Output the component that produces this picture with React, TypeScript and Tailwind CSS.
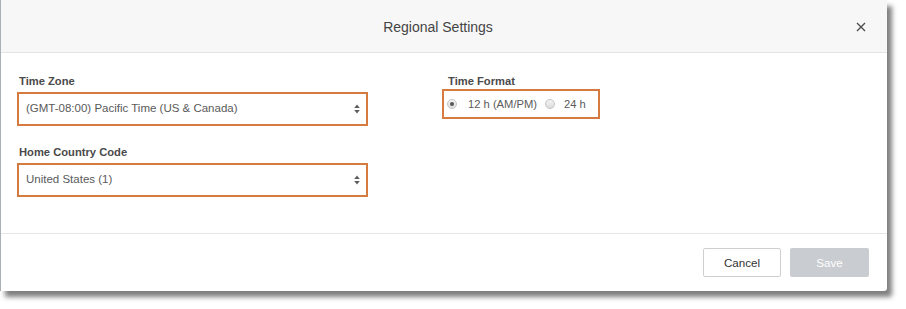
import { useState } from "react";

const font = { fontFamily: '"Liberation Sans", Arial, Helvetica, sans-serif' };

function SelectArrows() {
  return (
    <svg width="6" height="10" viewBox="0 0 6 10" className="shrink-0">
      <path d="M3 0.5 L5.8 4 L0.2 4 Z" fill="#5c5c5c" />
      <path d="M3 9.5 L5.8 6 L0.2 6 Z" fill="#5c5c5c" />
    </svg>
  );
}

function FakeSelect({ value }: { value: string }) {
  return (
    <div className="flex h-[34px] w-[351px] items-center justify-between border-2 border-[#d57b40] bg-white pl-[7px] pr-[6px]">
      <span className="text-[11.5px] text-[#5a5a5a]">{value}</span>
      <SelectArrows />
    </div>
  );
}

function Radio({ checked }: { checked: boolean }) {
  return (
    <span className="flex h-[10px] w-[10px] shrink-0 items-center justify-center rounded-full border border-[#c4c4c4] bg-gradient-to-b from-[#f4f4f4] to-[#dcdcdc]">
      {checked && <span className="h-[4px] w-[4px] rounded-full bg-[#555]" />}
    </span>
  );
}

export default function App() {
  const [format, setFormat] = useState<"12" | "24">("12");

  return (
    <div className="h-[309px] w-[906px] overflow-hidden bg-white" style={font}>
      <div className="flex h-[291px] w-[887px] flex-col rounded-br-[3px] border-l border-[#a9b0b6] bg-white shadow-[5px_6px_5px_rgba(0,0,0,0.5)]">
        {/* header */}
        <div className="relative flex h-[53px] shrink-0 items-center justify-center border-b border-[#e4e4e4] bg-[#f7f7f7] pr-[12px] pt-[2px]">
          <span className="text-[14px] text-[#444]">Regional Settings</span>
          <button className="absolute right-[20px] top-[21px] flex h-[12px] w-[12px] items-center justify-center">
            <svg width="10" height="10" viewBox="0 0 10 10">
              <path d="M1 1 L9 9 M9 1 L1 9" stroke="#4a4a4a" strokeWidth="1.3" />
            </svg>
          </button>
        </div>

        {/* body */}
        <div className="flex h-[180px] shrink-0 pl-[16px] pt-[21px]">
          <div className="flex flex-col">
            <label className="pl-[2px] text-[11.2px] font-bold leading-[14px] text-[#4a4a4a]">Time Zone</label>
            <div className="mt-[4px]">
              <FakeSelect value="(GMT-08:00) Pacific Time (US & Canada)" />
            </div>
            <label className="mt-[19px] pl-[2px] text-[11.2px] font-bold leading-[14px] text-[#4a4a4a]">
              Home Country Code
            </label>
            <div className="mt-[4px]">
              <FakeSelect value="United States (1)" />
            </div>
          </div>

          <div className="ml-[74px] flex flex-col">
            <label className="pl-[6px] text-[11.2px] font-bold leading-[14px] text-[#4a4a4a]">Time Format</label>
            <div className="mt-[1px] flex h-[30px] w-[158px] items-center border-2 border-[#d57b40] pl-[3px] text-[11.2px] text-[#5a5a5a]">
              <button className="flex items-center" onClick={() => setFormat("12")}>
                <Radio checked={format === "12"} />
                <span className="ml-[11px]">12 h (AM/PM)</span>
              </button>
              <button className="ml-[8px] flex items-center" onClick={() => setFormat("24")}>
                <Radio checked={format === "24"} />
                <span className="ml-[9px]">24 h</span>
              </button>
            </div>
          </div>
        </div>

        {/* footer */}
        <div className="flex flex-1 items-start justify-end gap-[9px] border-t border-[#e6e6e6] pr-[18px] pt-[14px]">
          <button className="h-[29px] w-[78px] rounded-[2px] border border-[#cfcfcf] bg-white text-[11.6px] text-[#333]">
            Cancel
          </button>
          <button className="h-[29px] w-[79px] rounded-[2px] bg-[#c9ccd0] text-[11.6px] text-white">Save</button>
        </div>
      </div>
    </div>
  );
}
